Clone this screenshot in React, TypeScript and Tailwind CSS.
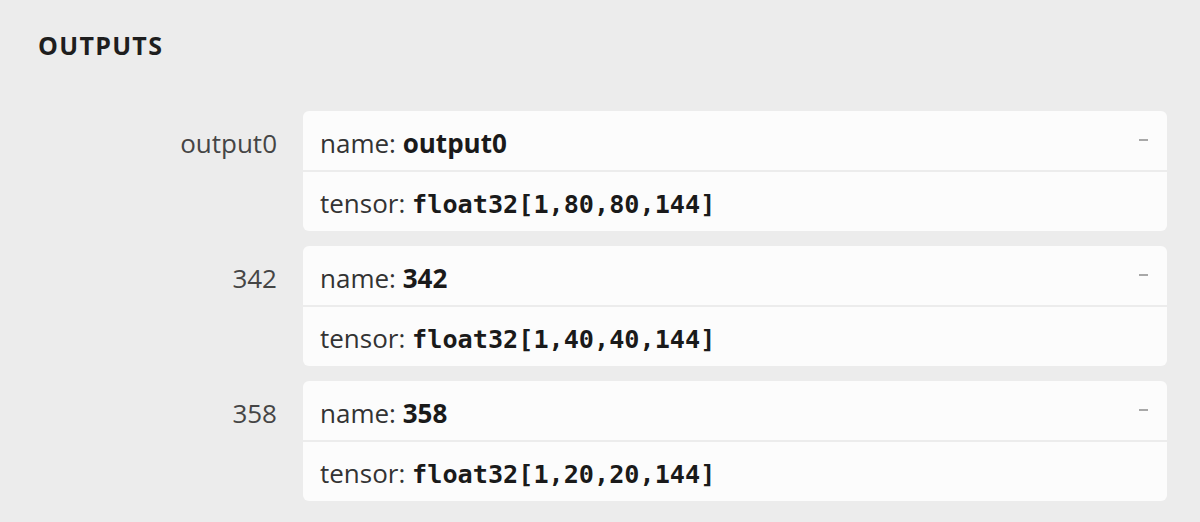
import React from 'react';

type Output = { label: string; name: string; type: string };

const outputs: Output[] = [
  { label: 'output0', name: 'output0', type: 'float32[1,80,80,144]' },
  { label: '342', name: '342', type: 'float32[1,40,40,144]' },
  { label: '358', name: '358', type: 'float32[1,20,20,144]' },
];

const sans = "font-['Open_Sans',sans-serif]";
const mono = "font-['DejaVu_Sans_Mono',monospace]";

const OutputRow: React.FC<{ item: Output }> = ({ item }) => (
  <div className="flex items-start gap-[26px]">
    {/* Label */}
    <div className="w-[239px] shrink-0 pt-[15px] text-right text-[26px] leading-[34px] text-[#454545]">
      {item.label}
    </div>

    {/* Card */}
    <div className="flex-1 overflow-hidden rounded-[6px] bg-[#fcfcfc]">
      <div className="flex h-[61px] items-start justify-between border-b-2 border-[#ececec] pl-[17px] pr-[19px] pt-[15px]">
        <div className="text-[26px] leading-[34px] text-[#333]">
          name: <span className="font-bold text-[#1a1a1a]">{item.name}</span>
        </div>
        <div className="mt-[13px] h-[2px] w-[9px] bg-[#a8a8a8]" />
      </div>
      <div className="flex h-[59px] items-start pl-[17px] pt-[14px]">
        <div className="text-[26px] leading-[34px] text-[#333]">
          tensor: <span className={`${mono} text-[25.2px] font-bold text-[#1a1a1a]`}>{item.type}</span>
        </div>
      </div>
    </div>
  </div>
);

export default function App() {
  return (
    <div className={`${sans} h-[522px] w-[1200px] overflow-hidden bg-[#ececec] pl-[38px] pr-[33px]`}>
      <div className="pt-[29px] text-[25px] font-bold leading-[33px] tracking-[1.3px] text-[#1e1e1e]">OUTPUTS</div>
      <div className="mt-[49px] flex flex-col gap-[15px]">
        {outputs.map((o) => (
          <OutputRow key={o.label} item={o} />
        ))}
      </div>
    </div>
  );
}
